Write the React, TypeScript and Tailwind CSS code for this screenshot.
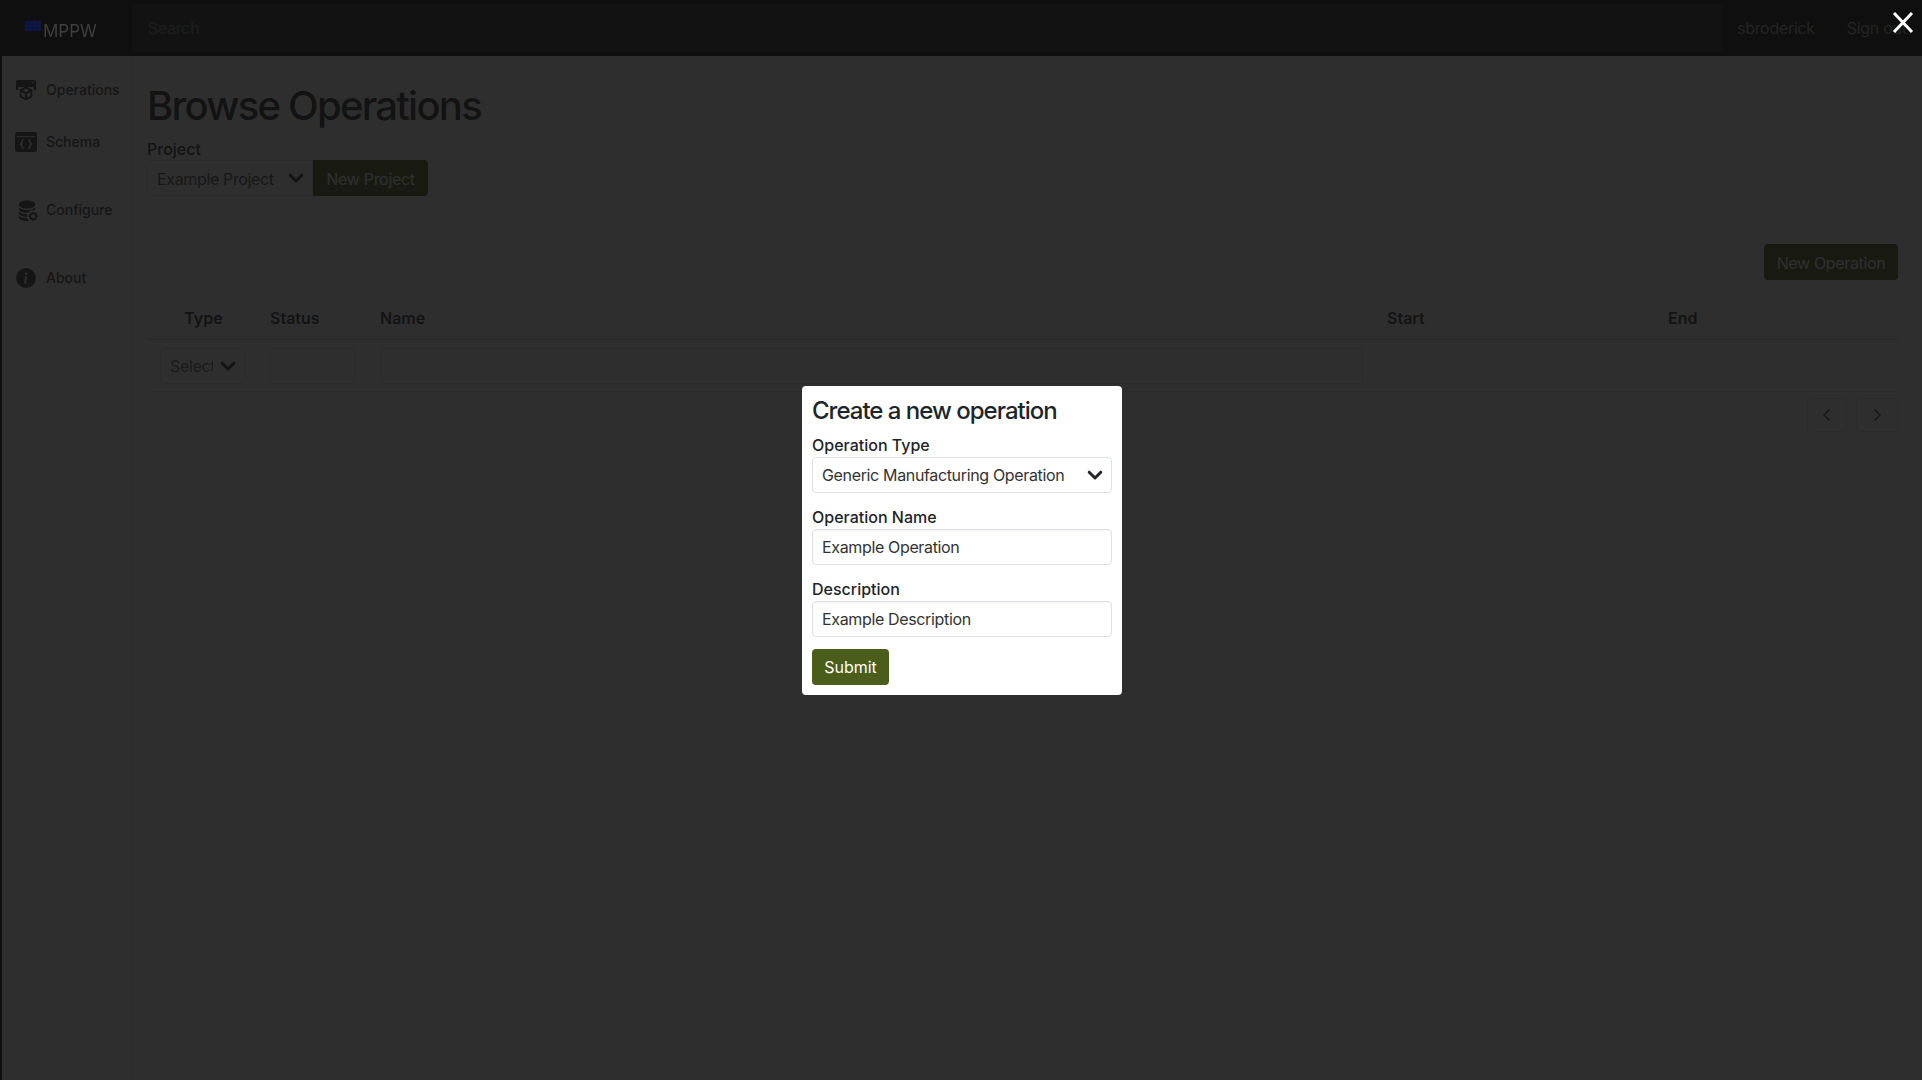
import React from "react";
import { BsDatabaseFillGear, BsInfoCircleFill } from "react-icons/bs";

function Chevron({ className }: { className: string }) {
  return (
    <svg viewBox="0 0 16 16" className={className} fill="none" stroke="currentColor" strokeWidth="3" strokeLinecap="round" strokeLinejoin="round">
      <path d="M2.2 5.2L8 11l5.8-5.8" />
    </svg>
  );
}

function OperationsIcon() {
  return (
    <svg viewBox="0 0 20 20" className="w-5 h-5" fill="currentColor">
      <path d="M2 0h16a2 2 0 0 1 2 2v8h-2.2V7H2.2v3H0V2a2 2 0 0 1 2-2z" />
      <circle cx="16.8" cy="2.4" r="0.8" fill="#fff" />
      <path d="M10 7.4l5.4 3v6.2L10 19.4l-5.4-2.8v-6.2zM4.6 10.4l5.4 3 5.4-3M10 13.4v6" fill="none" stroke="currentColor" strokeWidth="1.8" strokeLinejoin="round" />
    </svg>
  );
}

function SchemaIcon() {
  return (
    <svg viewBox="0 0 22 20" className="w-[22px] h-5">
      <rect width="22" height="20" rx="2.5" fill="currentColor" />
      <path d="M2 4.6h18" stroke="#fff" strokeWidth="0.9" />
      <path d="M8.6 7.5c-2 0-1.2 3.7-2.8 4.5 1.6.8.8 4.5 2.8 4.5M13.4 7.5c2 0 1.2 3.7 2.8 4.5-1.6.8-.8 4.5-2.8 4.5" fill="none" stroke="#fff" strokeWidth="1.5" />
    </svg>
  );
}

function NavItem({ icon, label, className }: { icon: React.ReactNode; label: string; className: string }) {
  return (
    <a className={`flex items-center h-6 pl-3 gap-2 text-sm font-medium text-[#333] ${className}`}>
      <span className="w-6 flex justify-center">{icon}</span>
      <span>{label}</span>
    </a>
  );
}

function Field({ label, value, last }: { label: string; value: string; last?: boolean }) {
  return (
    <div className={last ? "" : "mb-[13px]"}>
      <label className="block h-[23px] leading-[23px] font-medium text-[#212529]">{label}</label>
      <input
        readOnly
        value={value}
        className="block w-full h-9 px-[9px] border border-[#dee2e6] rounded-[4px] text-[#333] tracking-[-0.35px] outline-none shadow-[inset_0_1px_2px_rgba(0,0,0,0.05)]"
      />
    </div>
  );
}

const columns = "grid grid-cols-[111px_110px_1007px_281px_242px]";

export default function App() {
  return (
    <div className="min-h-screen flex flex-col bg-white border-l-2 border-black font-['Inter',sans-serif] text-[#212529]">
      <header className="h-14 flex bg-[#050505] shrink-0">
        <div className="w-[130px] flex items-center pl-[23px] shrink-0 relative z-50">
          <svg viewBox="0 0 16 10" className="w-4 h-[10px] mb-[5px] mr-[2px] shrink-0">
            <rect width="16" height="10" fill="#0e1745" />
            <path d="M0 3.3h16M0 6.6h16M4 0v10M8 0v10M12 0v10" stroke="#0b1130" strokeWidth="0.5" />
          </svg>
          <span className="text-[17px] leading-none mt-[7px] text-[#3f3f3f]">MPPW</span>
        </div>
        <input
          readOnly
          placeholder="Search"
          className="flex-1 my-1 pl-4 bg-[#1b1b1b] outline-none tracking-[-0.3px] placeholder:text-[#6c757d]"
        />
        <div className="w-[200px] shrink-0 flex items-center pl-[15px] gap-[32px] text-[#a0a0a0] tracking-[-0.3px] whitespace-nowrap overflow-hidden">
          <a>sbroderick</a>
          <a>Sign out</a>
        </div>
      </header>
      <div className="flex flex-1">
        <nav className="w-[130px] shrink-0 border-r border-[#e5e5e5] pt-[22px]">
          <NavItem icon={<OperationsIcon />} label="Operations" className="" />
          <NavItem icon={<SchemaIcon />} label="Schema" className="mt-[28px]" />
          <NavItem icon={<BsDatabaseFillGear className="w-[22px] h-[22px] ml-[2px]" />} label="Configure" className="mt-[44px]" />
          <NavItem icon={<BsInfoCircleFill className="w-5 h-5" />} label="About" className="mt-[44px]" />
        </nav>
        <main className="flex-1 pl-[15px] pr-6 pt-[26px]">
          <h1 className="text-[40px] leading-[48px] font-medium tracking-[-1.75px]">Browse Operations</h1>
          <label className="block mt-2 h-[22px] leading-[23px] font-medium">Project</label>
          <div className="flex h-9">
            <div className="relative w-[166px]">
              <select className="appearance-none w-full h-full pl-[9px] pt-px border border-[#d4d8dc] rounded-l-[4px] text-[#444] tracking-[-0.35px] outline-none">
                <option>Example Project</option>
              </select>
              <Chevron className="absolute right-[9px] top-[10px] w-4 h-4 text-[#212529]" />
            </div>
            <button className="w-[115px] pt-px bg-[#4b5d1b] text-white rounded-r-[4px] tracking-[-0.3px]">New Project</button>
          </div>
          <div className="flex justify-end mt-12">
            <button className="w-[134px] h-9 pt-px bg-[#4b5d1b] text-white rounded-[4px] tracking-[-0.35px]">New Operation</button>
          </div>
          <div className={`${columns} mt-[18px] h-[42px] items-center border-b-2 border-[#d4d8dc] font-semibold`}>
            <div className="text-center pl-[2px]">Type</div>
            <div className="px-3">Status</div>
            <div className="px-3">Name</div>
            <div className="px-3">Start</div>
            <div className="px-3">End</div>
          </div>
          <div className={`${columns} h-[52px] items-center border-b border-[#d4d8dc]`}>
            <div className="relative px-[13px]">
              <select className="appearance-none w-full h-9 pl-[9px] pr-[31px] border border-[#d4d8dc] rounded-[4px] text-[#666] tracking-[-0.35px] outline-none">
                <option>Select Type</option>
              </select>
              <Chevron className="absolute right-[22px] top-[10px] w-4 h-4 text-[#212529]" />
            </div>
            <div className="px-3">
              <input readOnly className="w-[86px] h-9 block border border-[#d4d8dc] rounded-[4px] outline-none" />
            </div>
            <div className="px-3">
              <input readOnly className="w-full h-9 block border border-[#d4d8dc] rounded-[4px] outline-none" />
            </div>
            <div />
            <div />
          </div>
          <div className="flex justify-end gap-[9px] mt-[6px]">
            <button className="w-10 h-[34px] border border-[#d4d8dc] rounded-[4px] flex items-center justify-center text-[#495057]">
              <svg viewBox="0 0 16 16" className="w-4 h-4" fill="none" stroke="currentColor" strokeWidth="1.6"><path d="M10.5 2.5L5 8l5.5 5.5" /></svg>
            </button>
            <button className="w-[42px] h-[34px] border border-[#d4d8dc] rounded-[4px] flex items-center justify-center text-[#495057]">
              <svg viewBox="0 0 16 16" className="w-4 h-4" fill="none" stroke="currentColor" strokeWidth="1.6"><path d="M5.5 2.5L11 8l-5.5 5.5" /></svg>
            </button>
          </div>
        </main>
      </div>

      <div className="fixed inset-0 z-40 pl-[2px] bg-[rgba(17,17,17,0.88)] flex items-center justify-center">
        <button className="absolute top-[11px] right-[7px] w-6 h-6 text-white">
          <svg viewBox="0 0 24 24" className="w-6 h-6" fill="none" stroke="currentColor" strokeWidth="3">
            <path d="M3 2l18 19M21 2L3 21" />
          </svg>
        </button>
        <div className="w-[320px] h-[309px] bg-white rounded-[4px] p-[10px] text-[#212529]">
          <h2 className="text-[24px] leading-[29px] font-medium tracking-[-1px] mb-[9px]">Create a new operation</h2>
          <div className="mb-[13px]">
            <label className="block h-[23px] leading-[23px] font-medium">Operation Type</label>
            <div className="relative">
              <select className="appearance-none block w-full h-9 pl-[9px] border border-[#dee2e6] rounded-[4px] text-[#333] tracking-[-0.35px] outline-none bg-white">
                <option>Generic Manufacturing Operation</option>
              </select>
              <Chevron className="absolute right-[9px] top-[10px] w-4 h-4 text-[#212529]" />
            </div>
          </div>
          <Field label="Operation Name" value="Example Operation" />
          <Field label="Description" value="Example Description" last />
          <button className="mt-3 w-[77px] h-9 bg-[#4b5d1b] text-white rounded-[4px]">Submit</button>
        </div>
      </div>
    </div>
  );
}
